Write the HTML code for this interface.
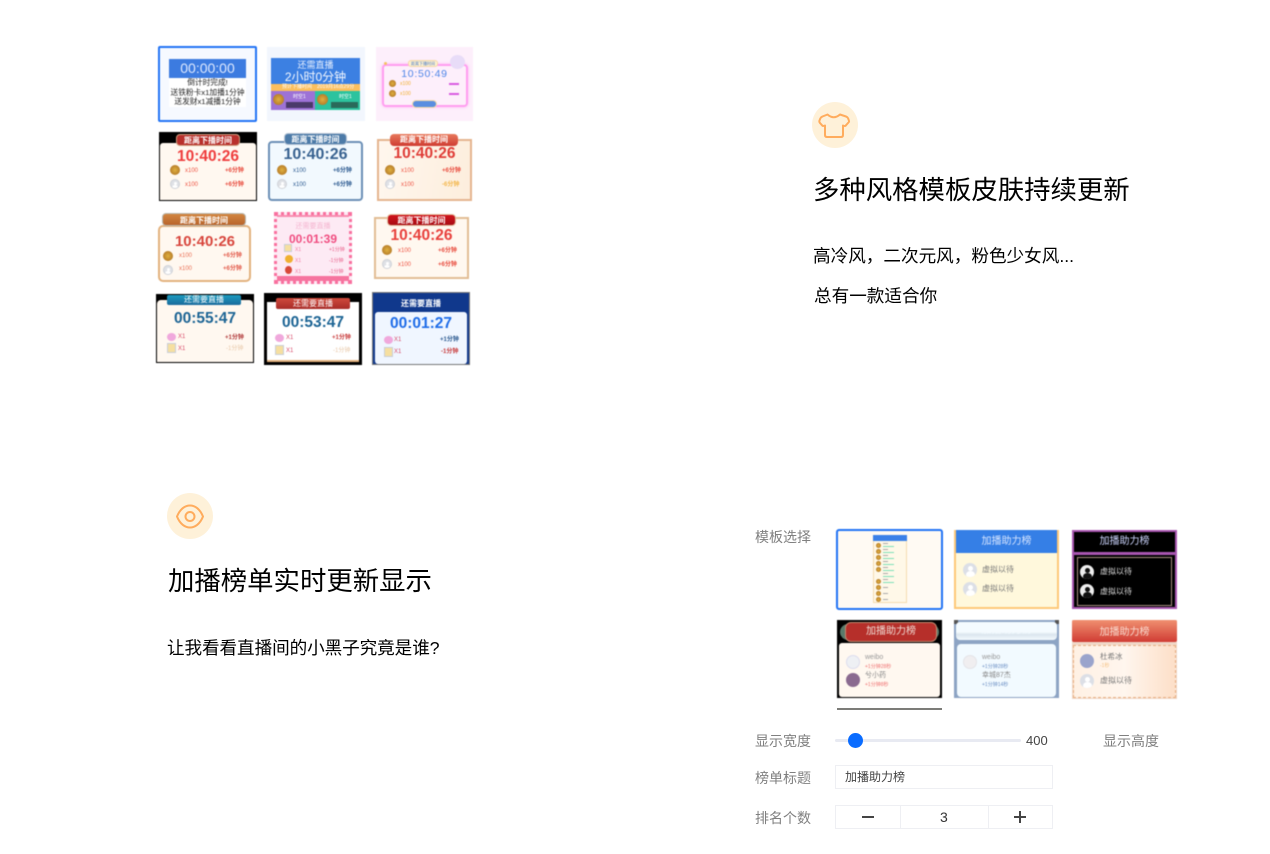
<!DOCTYPE html>
<html lang="zh"><head><meta charset="utf-8"><title>模板</title>
<style>
html,body{margin:0;padding:0;background:#fff}
body{width:1270px;height:854px;position:relative;overflow:hidden;font-family:"Liberation Sans","Noto Sans CJK SC",sans-serif}
.p{position:absolute;white-space:nowrap}
.h{font-size:26.4px;line-height:36px;color:#000}
.t{font-size:17.6px;line-height:26px;color:#000}
.l{font-size:14px;line-height:20px;color:#808080;filter:blur(.35px)}
.th{position:absolute;filter:blur(.45px);overflow:hidden;box-sizing:border-box}
.bl{filter:blur(.35px)}
.bn{position:absolute;text-align:center;color:#fff;font-size:8px;font-weight:700;border-radius:4px;white-space:nowrap}
.tm{position:absolute;left:0;right:0;text-align:center;font-weight:700;font-size:15.5px;line-height:18px;white-space:nowrap}
.s{position:absolute;font-size:6px;line-height:8px;white-space:nowrap}
.b{font-weight:700}
.av{position:absolute;width:10px;height:10px;border-radius:50%;background:#dfe1e6;border:1px solid #cfd2d8;box-sizing:border-box;overflow:hidden}
.av::before{content:"";position:absolute;left:2.5px;top:1.5px;width:3px;height:3px;border-radius:50%;background:#fff}
.av::after{content:"";position:absolute;left:1px;top:5px;width:6px;height:5px;border-radius:50%;background:#fff}
.g{position:absolute;width:10px;height:10px;border-radius:50%;background:radial-gradient(#e0b040,#a86a20)}
.f{position:absolute;width:9px;height:8px;border-radius:50%;background:#f0a8dc}
.sc{position:absolute;width:9px;height:10px;background:#f6dfa0;border:1px solid #c9ced8;box-sizing:border-box}
.w{position:absolute;font-size:8px;line-height:10px;white-space:nowrap}
.a2{position:absolute;width:14px;height:14px;border-radius:50%;background:#dcdfe6;box-sizing:border-box;overflow:hidden}
.a2.u::before{content:"";position:absolute;left:4.5px;top:2.5px;width:5px;height:5px;border-radius:50%;background:#fff}
.a2.u::after{content:"";position:absolute;left:2.5px;top:8px;width:9px;height:7px;border-radius:50%;background:#fff}
.a2.k::before{content:"";position:absolute;left:4.5px;top:2.5px;width:5px;height:5px;border-radius:50%;background:#111}
.a2.k::after{content:"";position:absolute;left:2.5px;top:8px;width:9px;height:7px;border-radius:50%;background:#111}
.ln{position:absolute;left:45px;width:5px;height:1px;background:#aaa}
.gr{position:absolute;left:45px;width:11px;height:1px;background:#7de0b8}
</style></head><body>

<!-- LEFT GRID -->
<div class="th" style="left:158px;top:46px;width:99px;height:76px;border:2px solid #2274f5;border-radius:2px;background:#f6f9ff">
 <div class="p" style="left:9px;top:11px;width:77px;height:19px;background:#3c7be0;color:#dfeaff;font-size:14px;line-height:19px;text-align:center">00:00:00</div>
 <div class="p" style="left:9px;top:30px;width:77px;height:29px;background:#fff"></div>
 <div class="p" style="left:9px;width:77px;top:30px;text-align:center;font-size:7.7px;line-height:9.6px;color:#222">倒计时完成!<br>送铁粉卡x1加播1分钟<br>送发财x1减播1分钟</div>
</div>
<div class="th" style="left:267px;top:47px;width:98px;height:74px;background:#f2f6fd">
 <div class="p" style="left:4px;top:11px;width:89px;height:26px;background:#3c80e2"></div>
 <div class="p" style="left:4px;top:12px;width:89px;text-align:center;color:#e8f0ff;font-size:9px;line-height:13px">还需直播</div>
 <div class="p" style="left:4px;top:22px;width:89px;text-align:center;color:#f4f8ff;font-size:12px;line-height:16px">2小时0分钟</div>
 <div class="p" style="left:4px;top:37px;width:89px;height:7px;background:#fbbf5e"></div>
 <div class="s" style="left:15px;top:37px;font-size:5px;line-height:7px;color:#fff">预计下播时间　2019月16点29分</div>
 <div class="p" style="left:4px;top:44px;width:44px;height:19px;background:#9d72d6"></div>
 <div class="p" style="left:48px;top:44px;width:45px;height:19px;background:#2cc39e"></div>
 <div class="g" style="left:6px;top:47px;width:11px;height:11px"></div><div class="g" style="left:50px;top:47px;width:11px;height:11px"></div>
 <div class="p" style="left:19px;top:55px;width:27px;height:6px;background:#4a3a6a"></div>
 <div class="p" style="left:64px;top:55px;width:27px;height:6px;background:#2a6a5a"></div>
 <div class="s" style="left:26px;top:46px;font-size:5px;color:#fff">时空1</div><div class="s" style="left:72px;top:46px;font-size:5px;color:#fff">时空1</div>
</div>
<div class="th" style="left:376px;top:47px;width:97px;height:74px;background:#fdeffb">
 <div class="p" style="left:6px;top:17px;width:86px;height:43px;border:2px solid #ff9df0;border-radius:4px;box-sizing:border-box;box-shadow:0 0 3px #ffb8f4"></div>
 <div class="p" style="left:32px;top:13px;width:30px;height:7px;background:#fff2cf;border-radius:3px;border:1px solid #f3d9a8;box-sizing:border-box;font-size:4px;line-height:5px;text-align:center;color:#4878c8">距离下播时间</div>
 <div class="tm" style="top:20px;color:#4e86e8;font-size:10.5px;line-height:14px;letter-spacing:.7px;font-weight:400">10:50:49</div>
 <div class="p" style="left:74px;top:8px;width:15px;height:14px;border-radius:50%;background:#e8dcf8"></div>
 <div class="p" style="left:8px;top:15px;width:3px;height:3px;border-radius:50%;background:#f4c460"></div>
 <div class="g" style="left:13px;top:33px;width:7px;height:7px"></div><div class="g" style="left:13px;top:43px;width:7px;height:7px"></div>
 <div class="s" style="left:24px;top:33px;font-size:5px;color:#f0b030">x100</div><div class="s" style="left:24px;top:43px;font-size:5px;color:#f0b030">x100</div>
 <div class="p" style="left:73px;top:36px;width:10px;height:2px;background:#d85ae0"></div><div class="p" style="left:73px;top:46px;width:10px;height:2px;background:#d85ae0"></div>
 <div class="p" style="left:36px;top:53px;width:25px;height:8px;background:#5a8ee0;border-radius:4px;border:1px solid #f3d9a8;box-sizing:border-box"></div>
</div>

<div class="th" style="left:159px;top:132px;width:98px;height:69px;background:#000">
 <div class="p" style="left:1px;top:11px;width:96px;height:57px;background:#fff8f0;border-radius:3px 3px 0 0"></div>
 <div class="bn" style="left:17px;top:2px;width:64px;height:12px;line-height:12px;background:#b8302c;border:1px solid #d0a080;box-sizing:border-box">距离下播时间</div>
 <div class="tm" style="top:16px;color:#ef3d3d">10:40:26</div>
 <div class="g" style="left:11px;top:33px"></div><div class="av" style="left:11px;top:47px"></div>
 <div class="s" style="left:26px;top:35px;color:#ee5544">x100</div><div class="s" style="left:26px;top:49px;color:#ee5544">x100</div>
 <div class="s b" style="left:66px;top:35px;color:#e84a3c">+6分钟</div><div class="s b" style="left:66px;top:49px;color:#e84a3c">+6分钟</div>
</div>
<div class="th" style="left:268px;top:132px;width:95px;height:70px">
 <div class="p" style="left:0;top:9px;width:95px;height:60px;background:#f2f9fe;border:2px solid #6b8fb6;border-radius:4px;box-sizing:border-box"></div>
 <div class="bn" style="left:16px;top:1px;width:63px;height:12px;line-height:12px;background:#4d7ba8;border:1px solid #b6c4d4;box-sizing:border-box">距离下播时间</div>
 <div class="tm" style="top:14px;color:#386290;font-size:16px">10:40:26</div>
 <div class="g" style="left:9px;top:33px"></div><div class="av" style="left:9px;top:47px"></div>
 <div class="s" style="left:25px;top:35px;color:#2c5a90">x100</div><div class="s" style="left:25px;top:49px;color:#2c5a90">x100</div>
 <div class="s b" style="left:65px;top:35px;color:#2c5a90">+6分钟</div><div class="s b" style="left:65px;top:49px;color:#2c5a90">+6分钟</div>
</div>
<div class="th" style="left:377px;top:132px;width:95px;height:70px">
 <div class="p" style="left:0;top:7px;width:95px;height:62px;background:linear-gradient(100deg,#fff7ee,#fdeedd);border:2px solid #e5b48f;box-sizing:border-box"></div>
 <div class="bn" style="left:13px;top:2px;width:68px;height:12px;line-height:12px;background:linear-gradient(#e87a5c,#cf3c32)">距离下播时间</div>
 <div class="tm" style="top:13px;color:#df3c36">10:40:26</div>
 <div class="g" style="left:8px;top:33px"></div><div class="av" style="left:8px;top:47px"></div>
 <div class="s" style="left:24px;top:35px;color:#ee5544">x100</div><div class="s" style="left:24px;top:49px;color:#ee5544">x100</div>
 <div class="s b" style="left:65px;top:35px;color:#e84a3c">+6分钟</div><div class="s b" style="left:65px;top:49px;color:#f3b64a">-6分钟</div>
</div>

<div class="th" style="left:158px;top:211px;width:94px;height:73px">
 <div class="p" style="left:0;top:14px;width:93px;height:57px;background:#fff8f0;border:2px solid #e3b27e;border-radius:5px;box-sizing:border-box"></div>
 <div class="bn" style="left:4px;top:2px;width:84px;height:13px;line-height:13px;background:linear-gradient(#d28640,#b8642c);border:1px solid #b8b8b0;box-sizing:border-box">距离下播时间</div>
 <div class="tm" style="top:22px;color:#d8453c;font-size:15px">10:40:26</div>
 <div class="g" style="left:5px;top:40px"></div><div class="av" style="left:5px;top:54px"></div>
 <div class="s" style="left:21px;top:41px;color:#ea7055">x100</div><div class="s" style="left:21px;top:54px;color:#ea7055">x100</div>
 <div class="s b" style="left:65px;top:41px;color:#e25a4a">+6分钟</div><div class="s b" style="left:65px;top:54px;color:#e25a4a">+6分钟</div>
</div>
<div class="th" style="left:274px;top:212px;width:78px;height:72px;background:#fdeaf4;border:3px dotted #f9709f">
 <div class="p" style="left:-3px;bottom:-3px;width:78px;height:8px;background:#f6749f"></div>
 <div class="p" style="left:-3px;top:-3px;width:78px;height:5px;background:#f88cb0"></div>
 <div class="s" style="left:0;right:0;top:8px;text-align:center;color:#f5b5d0;font-size:7px">还需要直播</div>
 <div class="tm" style="top:17px;color:#f04d80;font-size:12px;line-height:14px">00:01:39</div>
 <div class="sc" style="left:7px;top:29px;width:8px;height:8px"></div><div class="g" style="left:8px;top:40px;width:8px;height:8px;background:#f0b030"></div><div class="g" style="left:8px;top:51px;width:7px;height:8px;background:#d84838"></div>
 <div class="s" style="left:18px;top:31px;font-size:5px;color:#f07aa0">X1</div><div class="s" style="left:18px;top:42px;font-size:5px;color:#f07aa0">X1</div><div class="s" style="left:18px;top:53px;font-size:5px;color:#f07aa0">X1</div>
 <div class="s" style="left:52px;top:31px;font-size:5px;color:#e8608a">+1分钟</div><div class="s" style="left:52px;top:42px;font-size:5px;color:#e8608a">-1分钟</div><div class="s" style="left:52px;top:53px;font-size:5px;color:#e8608a">-1分钟</div>
</div>
<div class="th" style="left:373px;top:213px;width:97px;height:67px">
 <div class="p" style="left:1px;top:4px;width:95px;height:62px;background:#fff8f0;border:2px solid #e2bd94;box-sizing:border-box"></div>
 <div class="bn" style="left:14px;top:1px;width:69px;height:12px;line-height:12px;background:linear-gradient(#d0141c,#a80c14);border:1px solid #e2c0a0;box-sizing:border-box">距离下播时间</div>
 <div class="tm" style="top:14px;color:#e8403c;font-size:15.5px">10:40:26</div>
 <div class="g" style="left:9px;top:32px"></div><div class="av" style="left:9px;top:46px"></div>
 <div class="s" style="left:25px;top:34px;color:#ee5544">x100</div><div class="s" style="left:25px;top:48px;color:#ee5544">x100</div>
 <div class="s b" style="left:65px;top:34px;color:#e84a3c">+6分钟</div><div class="s b" style="left:65px;top:48px;color:#e84a3c">+6分钟</div>
</div>

<div class="th" style="left:156px;top:294px;width:98px;height:69px;background:#000">
 <div class="p" style="left:1px;top:6px;width:96px;height:62px;background:#fff8f0;border-radius:4px 4px 0 0"></div>
 <div class="bn" style="left:11px;top:1px;width:74px;height:10px;line-height:10px;background:linear-gradient(#1c9cc0,#1a6a9c);font-weight:400;border-radius:2px">还需要直播</div>
 <div class="tm" style="top:16px;color:#1c6494">00:55:47</div>
 <div class="f" style="left:11px;top:39px"></div><div class="sc" style="left:11px;top:49px;width:9px;height:10px"></div>
 <div class="s" style="left:22px;top:39px;color:#d84a6a">X1</div><div class="s" style="left:22px;top:51px;color:#d84a6a">X1</div>
 <div class="s b" style="left:69px;top:40px;color:#b03838">+1分钟</div><div class="s" style="left:70px;top:51px;color:#e8c8a8">-1分钟</div>
</div>
<div class="th" style="left:264px;top:293px;width:98px;height:72px;background:#000">
 <div class="p" style="left:3px;top:9px;width:92px;height:60px;background:#fff;border-bottom:2px solid #e3b27e;box-sizing:border-box"></div>
 <div class="bn" style="left:12px;top:5px;width:74px;height:11px;line-height:11px;background:linear-gradient(#d04a3c,#a82c28);font-weight:400;border-radius:2px">还需要直播</div>
 <div class="tm" style="top:21px;color:#1c6494">00:53:47</div>
 <div class="f" style="left:11px;top:41px"></div><div class="sc" style="left:11px;top:52px;width:9px;height:10px"></div>
 <div class="s" style="left:22px;top:41px;color:#d84a6a">X1</div><div class="s" style="left:22px;top:54px;color:#d84a6a">X1</div>
 <div class="s b" style="left:68px;top:41px;color:#c83a3a">+1分钟</div><div class="s" style="left:69px;top:54px;color:#e8c8a8">-1分钟</div>
</div>
<div class="th" style="left:372px;top:292px;width:98px;height:73px;background:#10388c;border:1px solid #777">
 <div class="p" style="left:2px;top:19px;width:92px;height:52px;background:#f0f6ff;border-radius:3px"></div>
 <div class="bn" style="left:10px;top:5px;width:76px;height:12px;line-height:12px;background:none">还需要直播</div>
 <div class="tm" style="top:22px;color:#1e6ce8">00:01:27</div>
 <div class="f" style="left:11px;top:43px"></div><div class="sc" style="left:11px;top:54px;width:9px;height:10px"></div>
 <div class="s" style="left:21px;top:43px;color:#d84a6a">X1</div><div class="s" style="left:21px;top:55px;color:#d84a6a">X1</div>
 <div class="s b" style="left:67px;top:43px;color:#2c5a90">+1分钟</div><div class="s b" style="left:68px;top:55px;color:#c83a3a">-1分钟</div>
</div>

<!-- TOP RIGHT FEATURE -->
<svg class="p" style="left:812px;top:102px" width="46" height="46" viewBox="812 102 46 46"><circle cx="835" cy="125" r="23" fill="#fef1d9"/><path d="M827.5 114.5 Q833.7 120 840 114.5 L846 116.5 Q847.5 117 848.2 118.5 L849 121 Q849.3 122 848 123 L845.5 125.8 Q844.8 126.3 843 125.5 L843 135 Q843 137 841 137 L827 137 Q825 137 825 135 L825 125.5 Q823 126.3 822.5 125.8 L820 123 Q819 122 819.5 120.5 L820.3 118.5 Q821 117 822.5 116.5 Z" fill="none" stroke="#ffac5d" stroke-width="2" stroke-linejoin="round"/></svg>
<div class="p h" style="left:813px;top:172px">多种风格模板皮肤持续更新</div>
<div class="p t" style="left:813px;top:243px">高冷风，二次元风，粉色少女风...</div>
<div class="p t" style="left:814px;top:283px">总有一款适合你</div>

<!-- BOTTOM LEFT FEATURE -->
<svg class="p" style="left:167px;top:493px" width="46" height="46" viewBox="167 493 46 46"><circle cx="190" cy="516" r="23" fill="#fef1d9"/><path d="M177 516.5 C180 509 185 505.500 190 505.500 C195 505.500 200 509 203 516.500 C200 524 195 527.500 190 527.500 C185 527.500 180 524 177 516.500 Z" fill="none" stroke="#ffac5d" stroke-width="2"/><circle cx="190" cy="516.500" r="4.500" fill="none" stroke="#ffac5d" stroke-width="2"/></svg>
<div class="p h" style="left:168px;top:563px">加播榜单实时更新显示</div>
<div class="p t" style="left:167px;top:635px;letter-spacing:-.08px">让我看看直播间的小黑子究竟是谁?</div>

<!-- BOTTOM RIGHT PANEL -->
<div class="p l" style="left:755px;top:527px">模板选择</div>

<div class="th" style="left:836px;top:529px;width:107px;height:81px;background:#fffaf3;border:2px solid #2274f5;border-radius:3px">
 <div class="p" style="left:35px;top:4px;width:34px;height:68px;background:#fff8e8;border:1px solid #f5ddb0;box-sizing:border-box"></div>
 <div class="p" style="left:35px;top:4px;width:34px;height:6px;background:#3a80e8"></div>
 <div class="g" style="left:38px;top:12px;width:5px;height:5px"></div><div class="g" style="left:38px;top:18px;width:5px;height:5px"></div><div class="g" style="left:38px;top:24px;width:5px;height:5px"></div><div class="g" style="left:38px;top:30px;width:5px;height:5px"></div><div class="g" style="left:38px;top:36px;width:5px;height:5px"></div><div class="g" style="left:38px;top:48px;width:5px;height:5px"></div><div class="g" style="left:38px;top:54px;width:5px;height:5px"></div><div class="g" style="left:38px;top:60px;width:5px;height:5px"></div><div class="g" style="left:38px;top:66px;width:5px;height:5px"></div>
 <div class="ln" style="top:12px"></div><div class="gr" style="top:15px"></div><div class="ln" style="top:18px"></div><div class="gr" style="top:21px"></div><div class="ln" style="top:24px"></div><div class="gr" style="top:27px"></div><div class="ln" style="top:30px"></div><div class="gr" style="top:33px"></div><div class="ln" style="top:36px"></div><div class="gr" style="top:39px"></div><div class="ln" style="top:42px"></div><div class="gr" style="top:45px"></div><div class="ln" style="top:48px"></div><div class="gr" style="top:51px"></div><div class="ln" style="top:56px"></div><div class="ln" style="top:62px"></div><div class="ln" style="top:68px"></div>
</div>

<div class="th" style="left:954px;top:530px;width:105px;height:79px;background:#fff8dc;border:2px solid #fdc878;border-top:0">
 <div class="p" style="left:-2px;top:0;width:105px;height:23px;background:#357fe6;color:#d8e6ff;font-size:10px;line-height:23px;text-align:center">加播助力榜</div>
 <div class="a2 u" style="left:7px;top:33px"></div><div class="a2 u" style="left:7px;top:52px"></div>
 <div class="w" style="left:26px;top:35px;color:#777">虚拟以待</div><div class="w" style="left:26px;top:54px;color:#777">虚拟以待</div>
</div>

<div class="th" style="left:1072px;top:530px;width:105px;height:79px;background:#000;border:2px solid #a855b0">
 <div class="p" style="left:-2px;top:20px;width:105px;height:3px;background:#a855b0"></div>
 <div class="p" style="left:0;top:0;width:101px;height:20px;color:#cdd6ff;font-size:10px;line-height:20px;text-align:center">加播助力榜</div>
 <div class="p" style="left:3px;top:25px;width:95px;height:49px;border:1px solid #a89080;box-sizing:border-box"></div>
 <div class="a2 k" style="left:6px;top:33px;background:#eee"></div><div class="a2 k" style="left:6px;top:52px;background:#eee"></div>
 <div class="w" style="left:26px;top:35px;color:#ddd">虚拟以待</div><div class="w" style="left:26px;top:55px;color:#ddd">虚拟以待</div>
</div>

<div class="th" style="left:837px;top:620px;width:105px;height:78px;background:#000">
 <div class="p" style="left:2px;top:23px;width:101px;height:54px;background:#fff8f0;border-radius:3px"></div>
 <div class="p" style="left:3px;top:4px;width:99px;height:16px;border-radius:8px;background:#5a7a6a"></div>
 <div class="p" style="left:8px;top:2px;width:92px;height:20px;background:#b62f2a;border:1px solid #c08a70;box-sizing:border-box;border-radius:6px;color:#f0dcd4;font-size:10px;line-height:18px;text-align:center">加播助力榜</div>
 <div class="a2" style="left:9px;top:35px;background:#eef0f4;border:1px solid #dde"></div><div class="a2" style="left:9px;top:53px;background:#8a6a90"></div>
 <div class="w" style="left:28px;top:33px;color:#999;font-size:7px">weibo</div><div class="w" style="left:28px;top:42px;color:#f07070;font-size:5px">+1分钟28秒</div>
 <div class="w" style="left:28px;top:51px;color:#888;font-size:7px">兮小药</div><div class="w" style="left:28px;top:60px;color:#f07070;font-size:5px">+1分钟8秒</div>
</div>

<div class="th" style="left:954px;top:620px;width:105px;height:78px;background:#8da4c4">
 <div class="p" style="left:0;top:0;width:4px;height:4px;background:#555"></div><div class="p" style="right:0;top:0;width:4px;height:4px;background:#555"></div>
 <div class="p" style="left:2px;top:2px;width:101px;height:18px;background:linear-gradient(#f4fbff 55%,#dbe6ee 70%,#f4fbff);border-radius:4px;color:#f4fbff;font-size:10px;line-height:18px;text-align:center">加播助力榜</div>
 <div class="p" style="left:3px;top:24px;width:99px;height:53px;background:#f2faff;border-radius:4px"></div>
 <div class="a2" style="left:9px;top:35px;background:#f0eef0;border:1px solid #e4e4e8"></div>
 <div class="w" style="left:28px;top:33px;color:#999;font-size:7px">weibo</div><div class="w" style="left:28px;top:42px;color:#6a8ec4;font-size:5px">+1分钟28秒</div>
 <div class="w" style="left:28px;top:51px;color:#888;font-size:7px">幸城87杰</div><div class="w" style="left:28px;top:60px;color:#6a8ec4;font-size:5px">+1分钟14秒</div>
</div>

<div class="th" style="left:1072px;top:620px;width:105px;height:79px;background:#f0d8c8">
 <div class="p" style="left:0;top:0;width:105px;height:22px;background:linear-gradient(#f09070,#d03c34);color:#f8dcd0;font-size:10px;line-height:26px;text-align:center;border-radius:2px">加播助力榜</div>
 <div class="p" style="left:1px;top:25px;width:103px;height:53px;background:linear-gradient(90deg,#fff1e4,#fff6ee 50%,#fddfc8);border:1px dashed #e8ae80;box-sizing:border-box"></div>
 <div class="a2" style="left:8px;top:34px;background:#9aa4cc"></div><div class="a2 u" style="left:8px;top:54px"></div>
 <div class="w" style="left:28px;top:32px;color:#777;font-size:7.5px">杜希冰</div><div class="w" style="left:28px;top:41px;color:#f5c080;font-size:5px">-1秒</div>
 <div class="w" style="left:28px;top:56px;color:#777">虚拟以待</div>
</div>

<div class="p bl" style="left:837px;top:708px;width:105px;height:1.5px;background:#7c7c78"></div>

<div class="p l" style="left:755px;top:731px">显示宽度</div>
<div class="p" style="left:835px;top:739px;width:186px;height:3px;background:#e8eaf2;border-radius:2px"></div>
<div class="p" style="left:848px;top:733px;width:15px;height:15px;border-radius:50%;background:#0a6cff"></div>
<div class="p bl" style="left:1026px;top:731px;font-size:13px;line-height:20px;color:#444">400</div>
<div class="p l" style="left:1103px;top:731px">显示高度</div>

<div class="p l" style="left:755px;top:768px">榜单标题</div>
<div class="p bl" style="left:835px;top:765px;width:218px;height:24px;border:1px solid #eeeff3;box-sizing:border-box;font-size:12px;line-height:22px;color:#444;padding-left:9px">加播助力榜</div>

<div class="p l" style="left:755px;top:808px">排名个数</div>
<div class="p" style="left:835px;top:805px;width:218px;height:24px;border:1px solid #eeeff3;box-sizing:border-box"></div>
<div class="p" style="left:900px;top:805px;width:1px;height:24px;background:#eeeff3"></div>
<div class="p" style="left:988px;top:805px;width:1px;height:24px;background:#eeeff3"></div>
<div class="p" style="left:862px;top:816px;width:12px;height:1.5px;background:#444"></div>
<div class="p" style="left:1014px;top:816px;width:12px;height:1.5px;background:#444"></div>
<div class="p" style="left:1019.25px;top:811px;width:1.5px;height:12px;background:#444"></div>
<div class="p bl" style="left:940px;top:807px;font-size:14px;line-height:20px;color:#333">3</div>

</body></html>
